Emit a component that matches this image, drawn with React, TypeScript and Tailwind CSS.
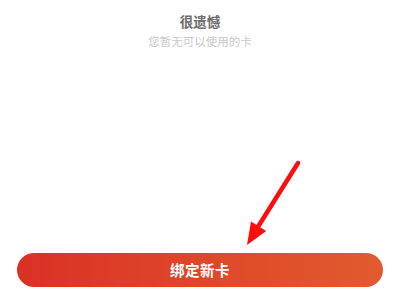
import React, { FC } from 'react';

const font = { fontFamily: '"Noto Sans CJK SC", "Noto Sans", sans-serif' };

const Arrow: FC = () => (
    <svg className="absolute left-0 top-0 pointer-events-none" width={400} height={289} viewBox="0 0 400 289">
        <line x1={298} y1={163} x2={256} y2={230} stroke="#ff0d0d" strokeWidth={4.5} strokeLinecap="round" />
        <polygon points="247,245 251,221.5 266.2,231" fill="#ff0d0d" />
    </svg>
);

const App: FC = () => {
    return (
        <div className="relative w-[400px] h-[289px] bg-white flex flex-col overflow-hidden" style={font}>
            <div className="flex flex-col items-center pt-[11px]">
                <p className="text-[13.5px] leading-[20px] font-bold text-[#6b6b6b]">很遗憾</p>
                <p className="text-[11.5px] leading-[18px] text-[#c9c9c9] mt-[1px]">您暂无可以使用的卡</p>
            </div>
            <div className="flex-1" />
            <button className="mx-[17px] mb-[2px] h-[34px] rounded-full bg-gradient-to-r from-[#da3025] to-[#e15a2e] text-white text-[14.5px] font-bold tracking-[0.5px]">
                绑定新卡
            </button>
            <Arrow />
        </div>
    );
};

export default App;
